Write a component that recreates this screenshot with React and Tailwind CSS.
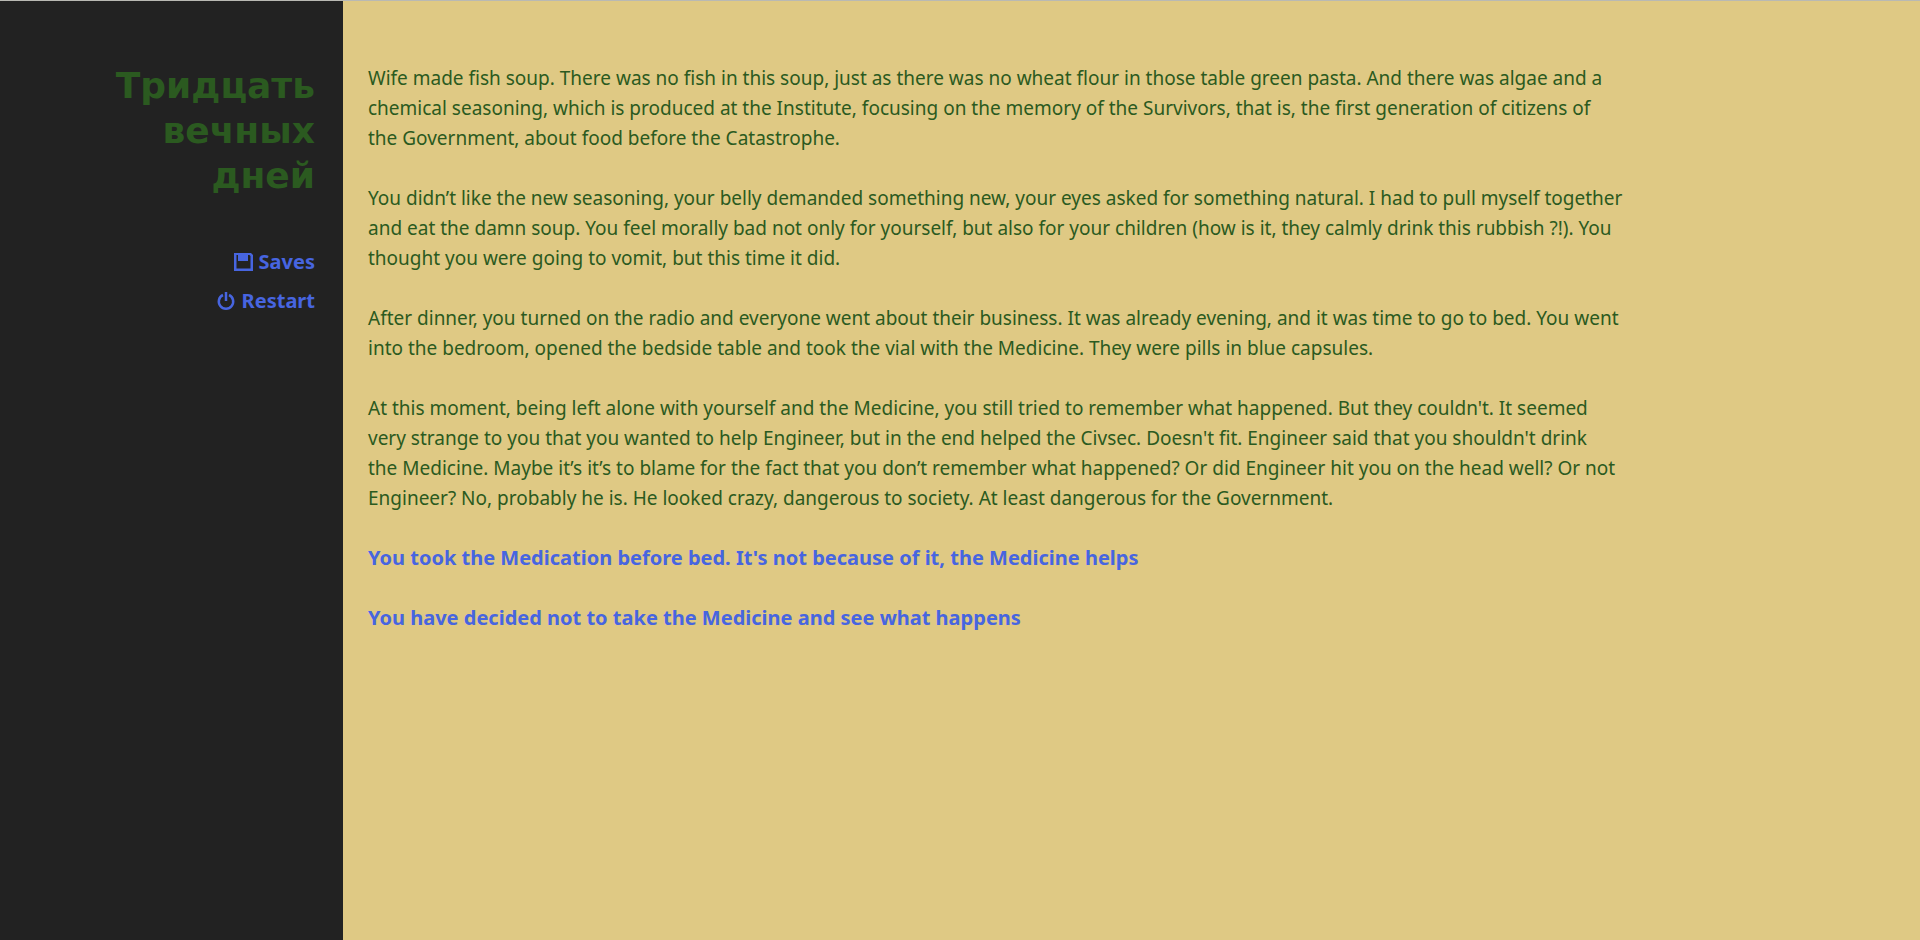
import React from 'react';

const paragraphs = [
  `Wife made fish soup. There was no fish in this soup, just as there was no wheat flour in those table green pasta. And there was algae and a
chemical seasoning, which is produced at the Institute, focusing on the memory of the Survivors, that is, the first generation of citizens of
the Government, about food before the Catastrophe.`,
  `You didn’t like the new seasoning, your belly demanded something new, your eyes asked for something natural. I had to pull myself together
and eat the damn soup. You feel morally bad not only for yourself, but also for your children (how is it, they calmly drink this rubbish ?!). You
thought you were going to vomit, but this time it did.`,
  `After dinner, you turned on the radio and everyone went about their business. It was already evening, and it was time to go to bed. You went
into the bedroom, opened the bedside table and took the vial with the Medicine. They were pills in blue capsules.`,
  `At this moment, being left alone with yourself and the Medicine, you still tried to remember what happened. But they couldn't. It seemed
very strange to you that you wanted to help Engineer, but in the end helped the Civsec. Doesn't fit. Engineer said that you shouldn't drink
the Medicine. Maybe it’s it’s to blame for the fact that you don’t remember what happened? Or did Engineer hit you on the head well? Or not
Engineer? No, probably he is. He looked crazy, dangerous to society. At least dangerous for the Government.`,
];

const choices = [
  "You took the Medication before bed. It's not because of it, the Medicine helps",
  'You have decided not to take the Medicine and see what happens',
];

const SaveIcon = () => (
  <svg className="size-5" viewBox="0 0 20 20" fill="currentColor" aria-hidden="true">
    <path fillRule="evenodd" d="M1 1H18L20 3V19H1ZM3.5 3V16.5H17.5V4L16.5 3H15V9H5V3Z" />
    <path fillRule="evenodd" d="M5 1H15V9H5ZM10.5 3V7H12.5V3Z" />
  </svg>
);

const RestartIcon = () => (
  <svg className="size-5" viewBox="0 0 20 20" fill="none" stroke="currentColor" strokeWidth="2.5" aria-hidden="true">
    <path d="M7 4A7.2 7.2 0 1 0 13 4" />
    <path d="M10 1V10" />
  </svg>
);

const menuItems = [
  { label: 'Saves', Icon: SaveIcon },
  { label: 'Restart', Icon: RestartIcon },
];

const App = () => {
  return (
    <div className="flex min-h-screen border-t border-[#b9b9b3] bg-[#dfc984] font-['Noto_Sans','DejaVu_Sans',sans-serif] text-[#2b5a20]">
      <aside className="w-[343px] shrink-0 bg-[#222222] pt-[62px] pr-7 pl-20 text-right">
        <h1 className="font-['DejaVu_Sans',sans-serif] text-4xl leading-[45px] font-bold">Тридцать вечных дней</h1>
        <nav className="mt-[46px] flex flex-col items-end gap-[3px]">
          {menuItems.map(({ label, Icon }) => (
            <button
              key={label}
              type="button"
              className="flex cursor-pointer items-center gap-[6px] text-xl leading-9 font-bold text-[#4765e0] hover:underline"
            >
              <Icon />
              {label}
            </button>
          ))}
        </nav>
      </aside>

      <main className="flex max-w-[1320px] flex-1 flex-col gap-[30px] px-[25px] pt-[62px] text-[19px] leading-[30px]">
        {paragraphs.map((text) => (
          <p key={text} className="whitespace-pre-line">
            {text}
          </p>
        ))}
        {choices.map((text) => (
          <p key={text}>
            <a href="#next" className="text-xl leading-[30px] font-bold text-[#4765e0] hover:underline">
              {text}
            </a>
          </p>
        ))}
      </main>
    </div>
  );
};

export default App;
